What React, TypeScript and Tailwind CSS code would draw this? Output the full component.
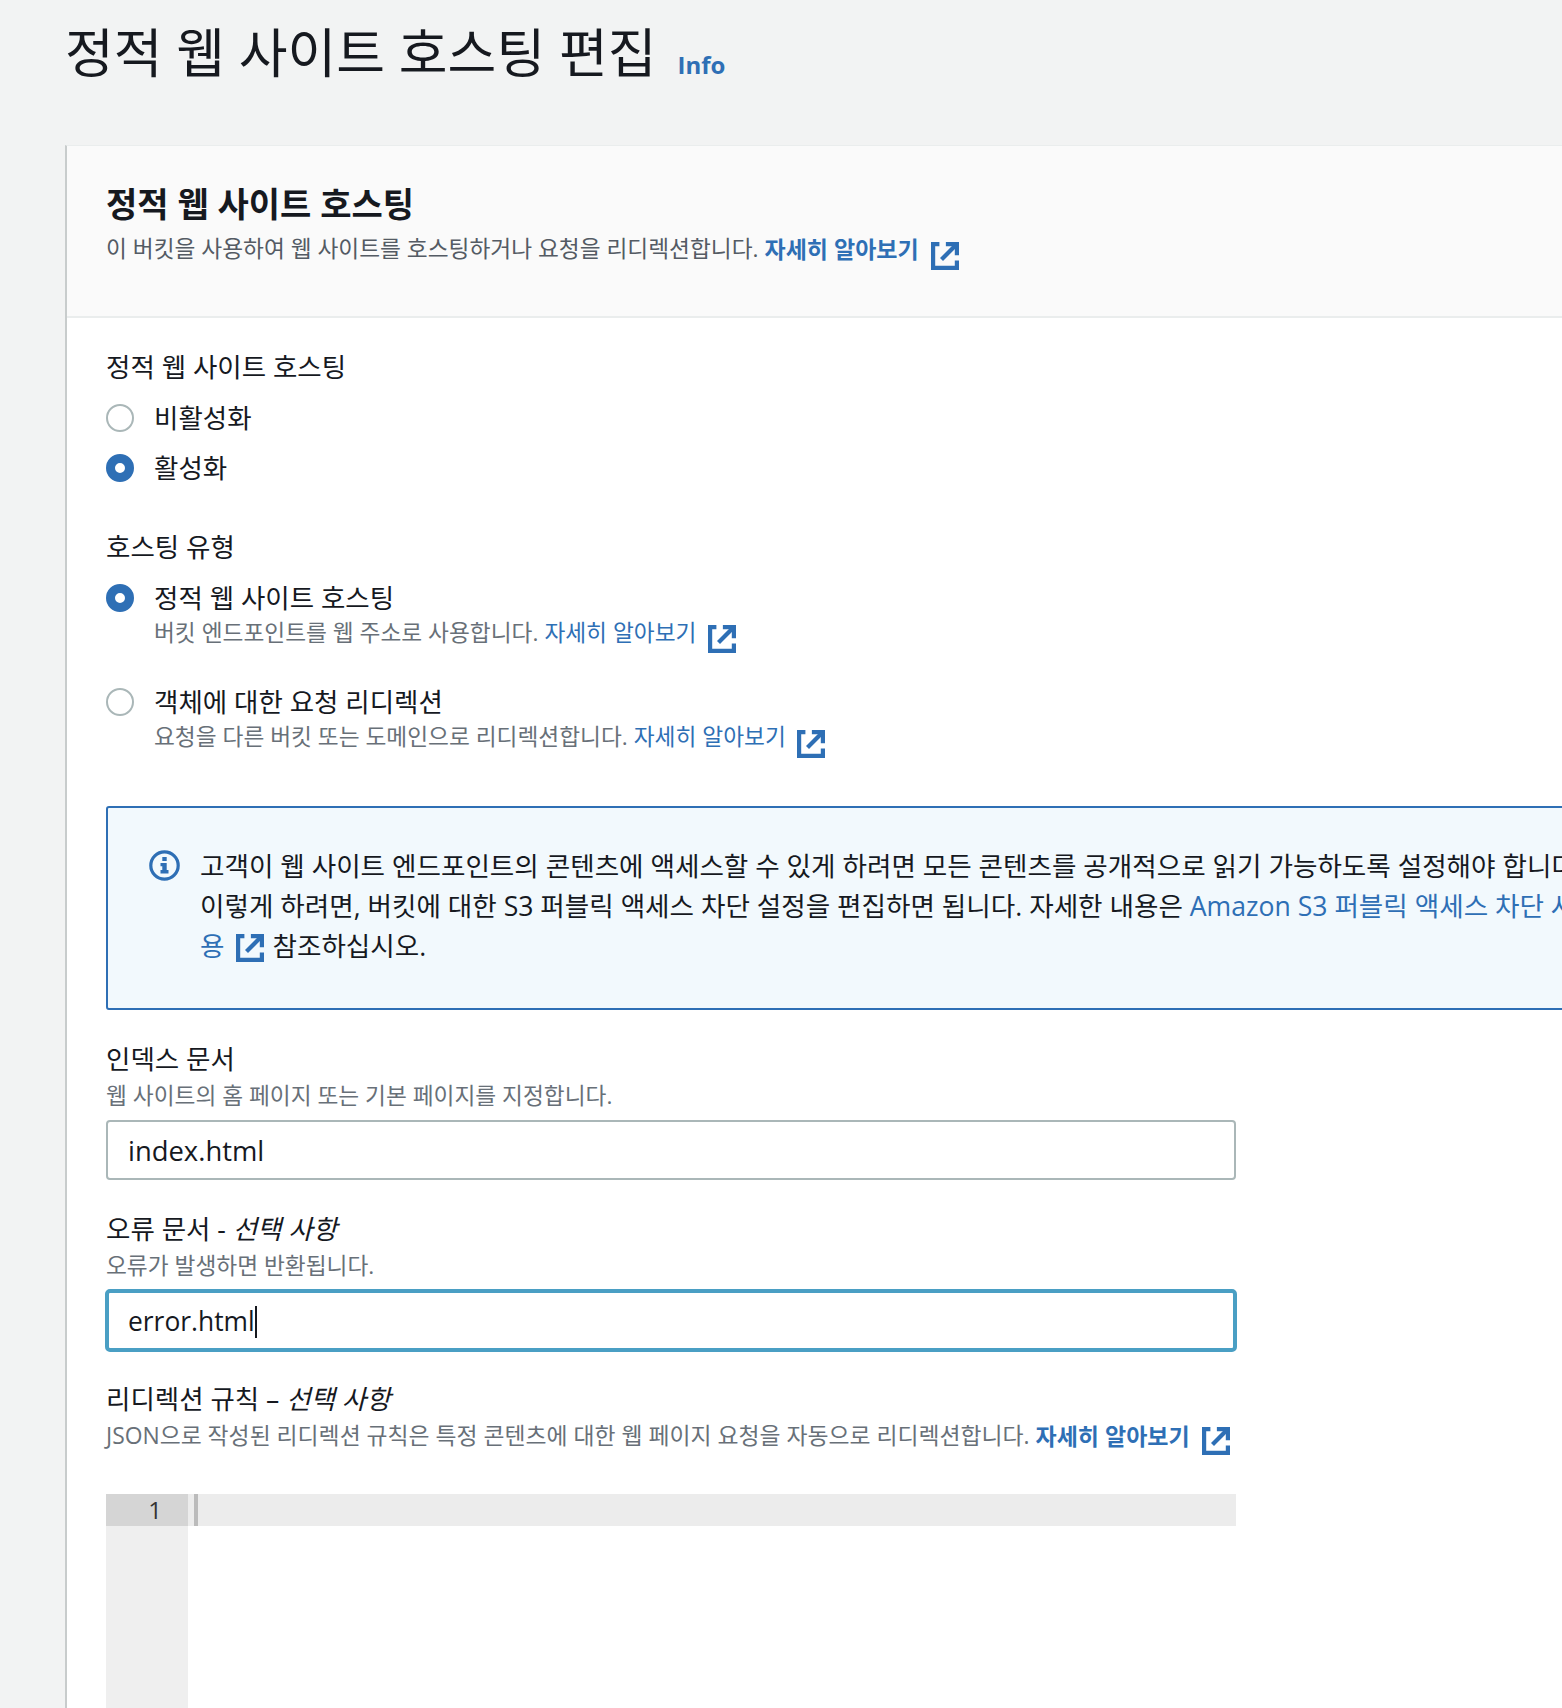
const blue = "text-[#2e6fb5]";

function ExternalIcon({ className = "" }: { className?: string }) {
  return (
    <svg
      viewBox="0 0 16 16"
      fill="none"
      stroke="#2e6fb5"
      strokeWidth="2.4"
      className={`inline-block h-[28px] w-[28px] shrink-0 ${className}`}
    >
      <path d="M4.8 1.2H1.2V14.8H14.8V10.5" />
      <path d="M8.5 1.2H14.8V7.5" />
      <path d="M14.8 1.2L6 10" />
    </svg>
  );
}

function InfoIcon() {
  return (
    <svg viewBox="0 0 31 31" fill="none" className="mt-[4px] h-[31px] w-[31px] shrink-0">
      <circle cx="15.5" cy="15.5" r="13.7" stroke="#2e6fb5" strokeWidth="3.2" />
      <rect x="13.3" y="7" width="4.4" height="4" fill="#2e6fb5" />
      <path d="M11.5 13H17.7V20H19.5V23.5H11.5V20H13.3V16.2H11.5Z" fill="#2e6fb5" />
    </svg>
  );
}

function Radio({ checked }: { checked?: boolean }) {
  return checked ? (
    <span className="h-[28px] w-[28px] shrink-0 rounded-full border-[9px] border-[#2e6fb5] bg-white" />
  ) : (
    <span className="h-[28px] w-[28px] shrink-0 rounded-full border-2 border-[#aab7b8] bg-white" />
  );
}

function Label({ className = "", children }: { className?: string; children: React.ReactNode }) {
  return <div className={`h-[34px] text-[26.5px] leading-[34px] text-[#16191f] ${className}`}>{children}</div>;
}

function Desc({ className = "", children }: { className?: string; children: React.ReactNode }) {
  return (
    <div className={`flex h-[34px] items-center whitespace-nowrap text-[22.7px] leading-[34px] text-[#687078] ${className}`}>
      {children}
    </div>
  );
}

function RadioRow({ checked, className = "", children }: { checked?: boolean; className?: string; children: React.ReactNode }) {
  return (
    <div className={`flex h-[34px] items-center gap-[20px] ${className}`}>
      <Radio checked={checked} />
      <span className="text-[26.5px] leading-[34px] text-[#16191f]">{children}</span>
    </div>
  );
}

export default function App() {
  return (
    <div className="h-[1708px] w-[1562px] overflow-hidden bg-[#f2f3f3] font-['Open_Sans','Noto_Sans_CJK_KR',sans-serif] text-[#16191f]">
      <header className="flex h-[145px] items-start whitespace-nowrap pl-[65px] pt-[18px]">
        <h1 className="text-[53px] leading-[70px] font-normal">정적 웹 사이트 호스팅 편집</h1>
        <a className={`ml-[21px] mt-[29px] text-[24px] leading-[36px] font-bold ${blue}`}>Info</a>
      </header>

      <main className="ml-[65px] h-[1563px] w-[1600px] border-l-2 border-t border-[#eaeded] border-l-[#c8cccc] bg-white">
        <section className="h-[172px] border-b-2 border-[#eaeded] bg-[#fafafa] pl-[39px] pt-[35px]">
          <h2 className="h-[51px] text-[34px] leading-[46px] font-bold">정적 웹 사이트 호스팅</h2>
          <div className="flex h-[34px] items-center whitespace-nowrap text-[22.7px] leading-[34px] text-[#545b64]">
            이 버킷을 사용하여 웹 사이트를 호스팅하거나 요청을 리디렉션합니다.
            <a className={`ml-[6px] text-[23px] font-bold ${blue}`}>자세히 알아보기</a>
            <ExternalIcon className="ml-[12px] mt-[14px]" />
          </div>
        </section>

        <form className="pl-[39px] pt-[32px]">
          <Label>정적 웹 사이트 호스팅</Label>
          <RadioRow className="mt-[17px]">비활성화</RadioRow>
          <RadioRow checked className="mt-[16px]">
            활성화
          </RadioRow>

          <Label className="mt-[45px]">호스팅 유형</Label>
          <RadioRow checked className="mt-[17px]">
            정적 웹 사이트 호스팅
          </RadioRow>
          <Desc className="ml-[48px] mt-[1px]">
            버킷 엔드포인트를 웹 주소로 사용합니다.
            <a className={`ml-[6px] ${blue}`}>자세히 알아보기</a>
            <ExternalIcon className="ml-[12px] mt-[12px]" />
          </Desc>
          <RadioRow className="mt-[35px]">객체에 대한 요청 리디렉션</RadioRow>
          <Desc className="ml-[48px] mt-[1px]">
            요청을 다른 버킷 또는 도메인으로 리디렉션합니다.
            <a className={`ml-[6px] ${blue}`}>자세히 알아보기</a>
            <ExternalIcon className="ml-[11px] mt-[14px]" />
          </Desc>

          <div className="mt-[52px] flex h-[204px] gap-[20px] rounded-[3px] border-2 border-[#2e6fb5] bg-[#f2f9fd] pl-[41px] pt-[38px]">
            <InfoIcon />
            <div className="whitespace-nowrap text-[26.6px] leading-[40px]">
              <div>고객이 웹 사이트 엔드포인트의 콘텐츠에 액세스할 수 있게 하려면 모든 콘텐츠를 공개적으로 읽기 가능하도록 설정해야 합니다.</div>
              <div>
                이렇게 하려면, 버킷에 대한 S3 퍼블릭 액세스 차단 설정을 편집하면 됩니다. 자세한 내용은{" "}
                <a className={blue}>Amazon S3 퍼블릭 액세스 차단 사</a>
              </div>
              <div className="flex items-center">
                <a className={blue}>용</a>
                <ExternalIcon className="ml-[12px] mt-[3px]" />
                <span className="ml-[8px]">참조하십시오.</span>
              </div>
            </div>
          </div>

          <div className="w-[1130px]">
            <Label className="mt-[32px]">인덱스 문서</Label>
            <Desc className="mt-[3px]">웹 사이트의 홈 페이지 또는 기본 페이지를 지정합니다.</Desc>
            <div className="mt-[7px] flex h-[60px] items-center rounded-[4px] border-2 border-[#aab7b8] bg-white pl-[20px] pt-[2px] text-[27.4px]">
              index.html
            </div>

            <Label className="mt-[32px]">
              오류 문서 - <i>선택 사항</i>
            </Label>
            <Desc className="mt-[3px]">오류가 발생하면 반환됩니다.</Desc>
            <div className="-mx-px mt-[6px] flex h-[63px] items-center rounded-[5px] border-4 border-[#4a9fc4] bg-white pl-[19px] pt-[2px] text-[26.4px]">
              error.html
              <span className="h-[32px] w-[2px] bg-[#16191f]" />
            </div>

            <Label className="mt-[30px]">
              리디렉션 규칙 – <i>선택 사항</i>
            </Label>
            <Desc className="mt-[3px] text-[22.85px]">
              JSON으로 작성된 리디렉션 규칙은 특정 콘텐츠에 대한 웹 페이지 요청을 자동으로 리디렉션합니다.
              <a className={`ml-[6px] text-[23px] font-bold ${blue}`}>자세히 알아보기</a>
              <ExternalIcon className="ml-[12px] mt-[10px]" />
            </Desc>

            <div className="mt-[41px] flex h-[300px]">
              <div className="w-[82px] bg-[#efefef]">
                <div className="h-[32px] bg-[#d5d5d5] pr-[26px] text-right text-[24px] leading-[32px] text-[#333333]">1</div>
              </div>
              <div className="flex-1">
                <div className="flex h-[32px] bg-[#ececec] pl-[6px]">
                  <span className="h-full w-[4px] bg-[#bbbbbb]" />
                </div>
              </div>
            </div>
          </div>
        </form>
      </main>
    </div>
  );
}
